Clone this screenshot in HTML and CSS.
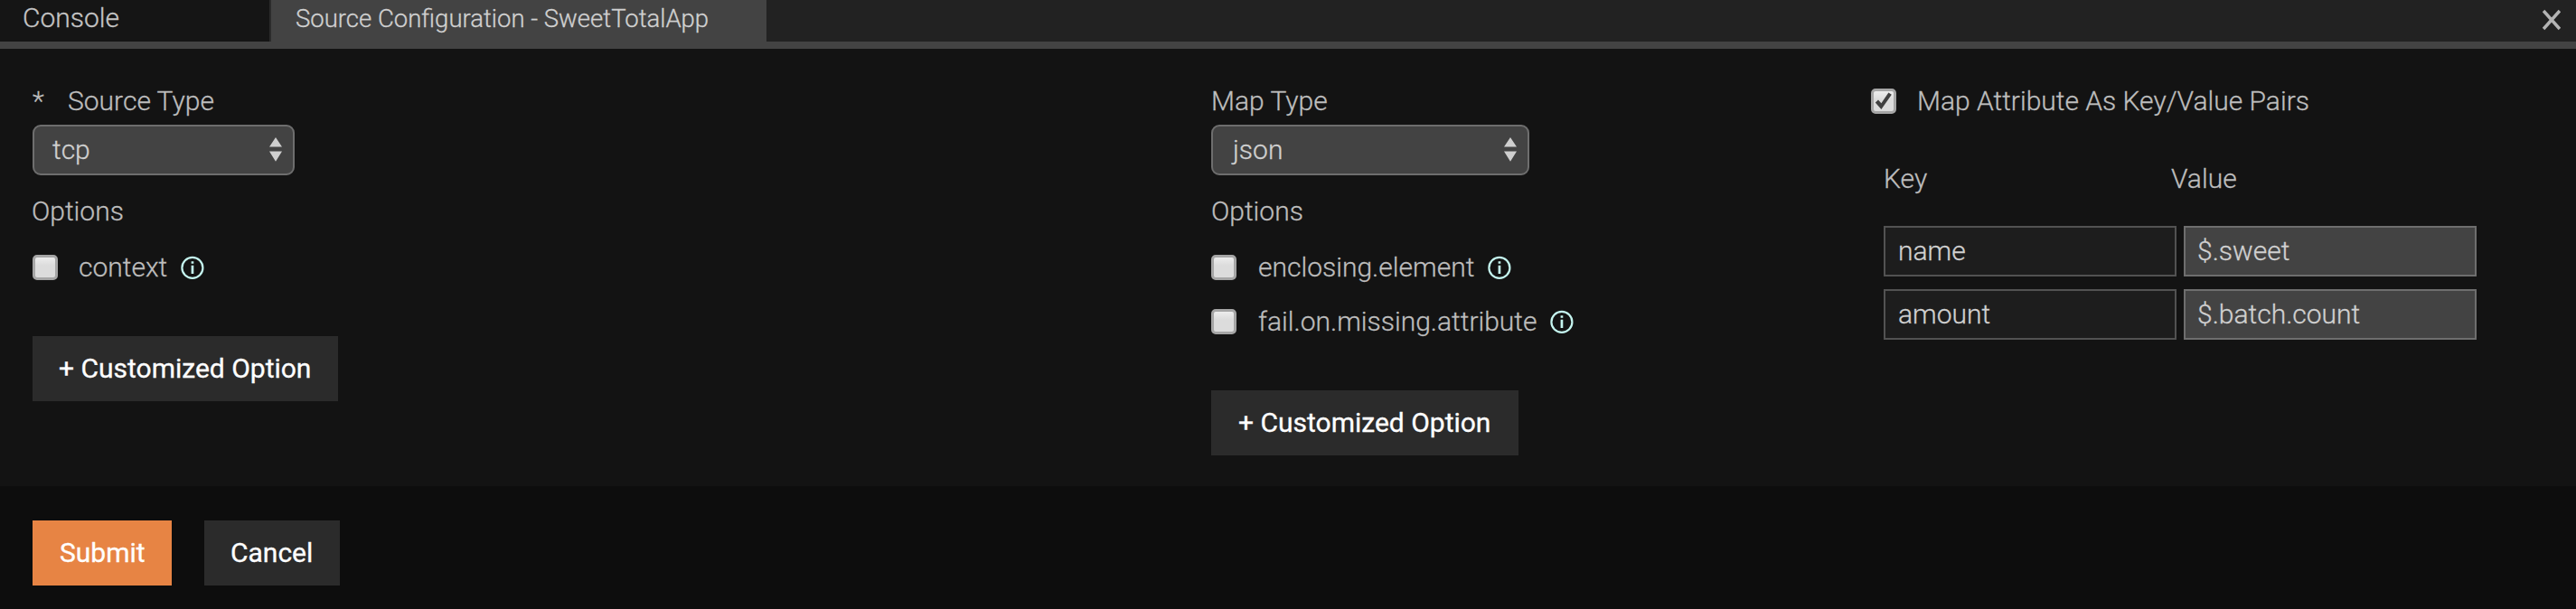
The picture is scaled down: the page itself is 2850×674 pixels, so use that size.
FILE: index.html
```
<!DOCTYPE html>
<html lang="en">
<head>
<meta charset="utf-8">
<title>Source Configuration - SweetTotalApp</title>
<link rel="stylesheet" href="styles.css">
</head>
<body>
<svg class="defs" aria-hidden="true">
  <symbol id="info" viewBox="0 0 26 26">
    <circle cx="12.9" cy="13.4" r="11.5" fill="none" stroke="currentColor" stroke-width="2.2"/>
    <path d="M11.6 6.2h2.7v2.5h-2.7zM11.6 10.8h2.7v9.1h-2.7z" fill="currentColor"/>
  </symbol>
  <symbol id="sort" viewBox="0 0 14 28">
    <path d="M7 0L14 10.6H0zM0 15.6h14L7 26.7z" fill="currentColor"/>
  </symbol>
</svg>
<nav class="tabs">
  <div class="tab tab-console"><span>Console</span></div>
  <div class="tab tab-active"><span>Source Configuration - SweetTotalApp</span></div>
  <svg class="close" viewBox="0 0 20 24"><path d="M1 2L19 22M19 2L1 22" stroke="#b4b4b4" stroke-width="3.6" fill="none"/></svg>
</nav>
<main class="panel">
  <section class="col col-source">
    <div class="label"><span class="star">*</span><span>Source Type</span></div>
    <div class="select select-source"><span>tcp</span><svg class="sort"><use href="#sort"/></svg></div>
    <div class="label options">Options</div>
    <div class="option"><i class="check"></i><span>context</span><svg class="info"><use href="#info"/></svg></div>
    <button class="btn btn-custom"><span>+ Customized Option</span></button>
  </section>
  <section class="col col-map">
    <div class="label"><span>Map Type</span></div>
    <div class="select select-map"><span>json</span><svg class="sort"><use href="#sort"/></svg></div>
    <div class="label options">Options</div>
    <div class="option"><i class="check"></i><span>enclosing.element</span><svg class="info"><use href="#info"/></svg></div>
    <div class="option"><i class="check"></i><span>fail.on.missing.attribute</span><svg class="info"><use href="#info"/></svg></div>
    <button class="btn btn-custom btn-map"><span>+ Customized Option</span></button>
  </section>
  <section class="col col-attrs">
    <div class="attr-toggle"><i class="check"><svg viewBox="0 0 28 28"><path d="M4.8 15.6L8 12.4l3.4 3.8L19.4 4.6l3.4 2.2L11.4 23z" fill="#404040"/></svg></i><span>Map Attribute As Key/Value Pairs</span></div>
    <div class="heads"><span class="head-key">Key</span><span>Value</span></div>
    <div class="pairs">
      <div class="field key"><span>name</span></div><div class="field value"><span>$.sweet</span></div>
      <div class="field key"><span>amount</span></div><div class="field value"><span>$.batch.count</span></div>
    </div>
  </section>
</main>
<footer class="actions">
  <button class="btn btn-submit"><span>Submit</span></button>
  <button class="btn btn-cancel"><span>Cancel</span></button>
</footer>
</body>
</html>
```
FILE: styles.css
```
* { box-sizing: border-box; }
body {
  margin: 0;
  width: 2850px;
  height: 674px;
  overflow: hidden;
  display: flex;
  flex-direction: column;
  background: #131313;
  color: #bdbdbd;
  font: 300 30px/36px Roboto, sans-serif;
  -webkit-text-stroke: 0.3px currentColor;
}
.defs { display: none; }
.tabs {
  height: 54px;
  display: flex;
  background: #222;
  border-bottom: 8px solid #434343;
}
.tab { height: 46px; padding-top: 2px; white-space: nowrap; }
.tab-console { width: 300px; padding-left: 25px; background: #151515; border-right: 2px solid #2b2b2b; color: #c4c4c4; }
.tab-active { width: 548px; padding: 3px 0 0 27px; background: #434343; color: #d0d0d0; font-size: 27.5px; }
.close { width: 20px; height: 24px; margin: 10px 17px 0 auto; }
.panel { height: 484px; display: flex; padding-left: 36px; }
.col { padding-top: 40px; }
.col-source { width: 1304px; }
.col-map { width: 730px; }
.label { height: 36px; display: flex; }
.star { width: 39px; }
.select {
  height: 56px;
  margin-top: 8px;
  padding: 0 12px 0 20px;
  display: flex;
  align-items: center;
  justify-content: space-between;
  background: #434343;
  border: 2px solid #6e6e6e;
  border-radius: 9px;
  color: #d0d0d0;
}
.select-source { width: 290px; }
.select-map { width: 352px; padding-left: 22px; }
.sort { width: 14px; height: 28px; color: #cfcfcf; }
.options { margin-top: 22px; }
.col-source .options { text-indent: -1px; }
.option { height: 60px; display: flex; align-items: center; }
.options + .option { margin-top: 14px; }
.check {
  width: 28px;
  height: 28px;
  flex: none;
  margin-right: 24px;
  border: 3px solid #a6a6a6;
  border-radius: 5px;
  background: linear-gradient(#ededed, #dcdcdc 40%, #dcdcdc);
}
.col-source .check, .col-attrs .check { margin-right: 23px; }
.check svg { display: block; width: 28px; height: 28px; margin: -3px; }
.info { width: 26px; height: 26px; margin-left: 14.8px; color: #c4f5ef; overflow: visible; }
.btn {
  display: flex;
  align-items: center;
  height: 72px;
  padding: 0 0 0 29px;
  border: 0;
  background: #2b2b2b;
  color: #fff;
  font: 400 30px/36px Roboto, sans-serif;
  -webkit-text-stroke: 0.3px currentColor;
  white-space: nowrap;
}
.btn-custom { width: 338px; margin-top: 46px; }
.btn-map { width: 340px; padding-left: 30px; }
.attr-toggle { height: 36px; display: flex; align-items: center; }
.heads { display: flex; margin: 50px 0 0 14px; }
.head-key { width: 318px; }
.pairs { display: grid; grid-template-columns: 324px 324px; gap: 14px 8px; margin: 34px 0 0 14px; }
.field { height: 56px; padding: 8px 14px; border: 2px solid #525252; background: #1d1d1d; color: #d0d0d0; }
.field.value { padding-left: 13px; border-color: #6e6e6e; background: #434343; }
.actions { height: 136px; padding: 38px 0 0 36px; display: flex; gap: 36px; background: #0d0d0d; }
.btn-submit { width: 154px; padding-left: 30px; background: #e78444; }
.btn-cancel { width: 150px; }
```
